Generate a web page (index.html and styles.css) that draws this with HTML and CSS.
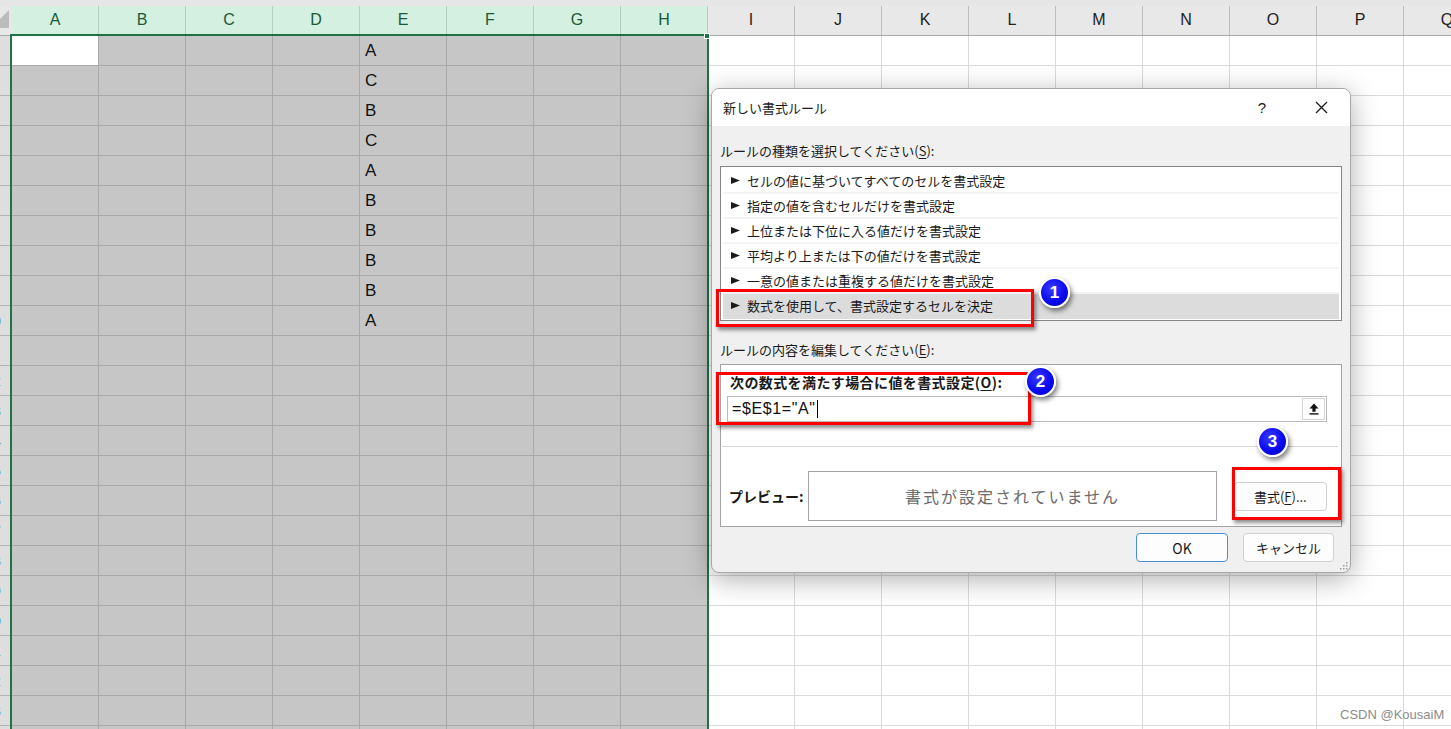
FILE: index.html
```html
<!DOCTYPE html>
<html lang="ja">
<head>
<meta charset="utf-8">
<title>新しい書式ルール</title>
<link rel="stylesheet" href="styles.css">
</head>
<body>
<div class="sheet">
  <div class="band"></div>
  <div class="hrow">
    <div class="corner"><svg width="12" height="29" viewBox="0 0 12 29"><polygon points="9,4 9,22 -9,22" fill="#bcbcbc"/></svg></div>
    <div class="ch sel">A</div><div class="ch sel">B</div><div class="ch sel">C</div><div class="ch sel">D</div><div class="ch sel">E</div><div class="ch sel">F</div><div class="ch sel">G</div><div class="ch sel">H</div>
    <div class="ch">I</div><div class="ch">J</div><div class="ch">K</div><div class="ch">L</div><div class="ch">M</div><div class="ch">N</div><div class="ch">O</div><div class="ch">P</div><div class="ch">Q</div>
  </div>
  <div class="r"><div class="rh"><span>1</span></div><span class="c a"></span><span class="c s"></span><span class="c s"></span><span class="c s"></span><span class="c s">A</span><span class="c s"></span><span class="c s"></span><span class="c s"></span><span class="c"></span><span class="c"></span><span class="c"></span><span class="c"></span><span class="c"></span><span class="c"></span><span class="c"></span><span class="c"></span><span class="c"></span></div>
  <div class="r"><div class="rh"><span>2</span></div><span class="c s"></span><span class="c s"></span><span class="c s"></span><span class="c s"></span><span class="c s">C</span><span class="c s"></span><span class="c s"></span><span class="c s"></span><span class="c"></span><span class="c"></span><span class="c"></span><span class="c"></span><span class="c"></span><span class="c"></span><span class="c"></span><span class="c"></span><span class="c"></span></div>
  <div class="r"><div class="rh"><span>3</span></div><span class="c s"></span><span class="c s"></span><span class="c s"></span><span class="c s"></span><span class="c s">B</span><span class="c s"></span><span class="c s"></span><span class="c s"></span><span class="c"></span><span class="c"></span><span class="c"></span><span class="c"></span><span class="c"></span><span class="c"></span><span class="c"></span><span class="c"></span><span class="c"></span></div>
  <div class="r"><div class="rh"><span>4</span></div><span class="c s"></span><span class="c s"></span><span class="c s"></span><span class="c s"></span><span class="c s">C</span><span class="c s"></span><span class="c s"></span><span class="c s"></span><span class="c"></span><span class="c"></span><span class="c"></span><span class="c"></span><span class="c"></span><span class="c"></span><span class="c"></span><span class="c"></span><span class="c"></span></div>
  <div class="r"><div class="rh"><span>5</span></div><span class="c s"></span><span class="c s"></span><span class="c s"></span><span class="c s"></span><span class="c s">A</span><span class="c s"></span><span class="c s"></span><span class="c s"></span><span class="c"></span><span class="c"></span><span class="c"></span><span class="c"></span><span class="c"></span><span class="c"></span><span class="c"></span><span class="c"></span><span class="c"></span></div>
  <div class="r"><div class="rh"><span>6</span></div><span class="c s"></span><span class="c s"></span><span class="c s"></span><span class="c s"></span><span class="c s">B</span><span class="c s"></span><span class="c s"></span><span class="c s"></span><span class="c"></span><span class="c"></span><span class="c"></span><span class="c"></span><span class="c"></span><span class="c"></span><span class="c"></span><span class="c"></span><span class="c"></span></div>
  <div class="r"><div class="rh"><span>7</span></div><span class="c s"></span><span class="c s"></span><span class="c s"></span><span class="c s"></span><span class="c s">B</span><span class="c s"></span><span class="c s"></span><span class="c s"></span><span class="c"></span><span class="c"></span><span class="c"></span><span class="c"></span><span class="c"></span><span class="c"></span><span class="c"></span><span class="c"></span><span class="c"></span></div>
  <div class="r"><div class="rh"><span>8</span></div><span class="c s"></span><span class="c s"></span><span class="c s"></span><span class="c s"></span><span class="c s">B</span><span class="c s"></span><span class="c s"></span><span class="c s"></span><span class="c"></span><span class="c"></span><span class="c"></span><span class="c"></span><span class="c"></span><span class="c"></span><span class="c"></span><span class="c"></span><span class="c"></span></div>
  <div class="r"><div class="rh"><span>9</span></div><span class="c s"></span><span class="c s"></span><span class="c s"></span><span class="c s"></span><span class="c s">B</span><span class="c s"></span><span class="c s"></span><span class="c s"></span><span class="c"></span><span class="c"></span><span class="c"></span><span class="c"></span><span class="c"></span><span class="c"></span><span class="c"></span><span class="c"></span><span class="c"></span></div>
  <div class="r"><div class="rh"><span>10</span></div><span class="c s"></span><span class="c s"></span><span class="c s"></span><span class="c s"></span><span class="c s">A</span><span class="c s"></span><span class="c s"></span><span class="c s"></span><span class="c"></span><span class="c"></span><span class="c"></span><span class="c"></span><span class="c"></span><span class="c"></span><span class="c"></span><span class="c"></span><span class="c"></span></div>
  <div class="r"><div class="rh"><span>11</span></div><span class="c s"></span><span class="c s"></span><span class="c s"></span><span class="c s"></span><span class="c s"></span><span class="c s"></span><span class="c s"></span><span class="c s"></span><span class="c"></span><span class="c"></span><span class="c"></span><span class="c"></span><span class="c"></span><span class="c"></span><span class="c"></span><span class="c"></span><span class="c"></span></div>
  <div class="r"><div class="rh"><span>12</span></div><span class="c s"></span><span class="c s"></span><span class="c s"></span><span class="c s"></span><span class="c s"></span><span class="c s"></span><span class="c s"></span><span class="c s"></span><span class="c"></span><span class="c"></span><span class="c"></span><span class="c"></span><span class="c"></span><span class="c"></span><span class="c"></span><span class="c"></span><span class="c"></span></div>
  <div class="r"><div class="rh"><span>13</span></div><span class="c s"></span><span class="c s"></span><span class="c s"></span><span class="c s"></span><span class="c s"></span><span class="c s"></span><span class="c s"></span><span class="c s"></span><span class="c"></span><span class="c"></span><span class="c"></span><span class="c"></span><span class="c"></span><span class="c"></span><span class="c"></span><span class="c"></span><span class="c"></span></div>
  <div class="r"><div class="rh"><span>14</span></div><span class="c s"></span><span class="c s"></span><span class="c s"></span><span class="c s"></span><span class="c s"></span><span class="c s"></span><span class="c s"></span><span class="c s"></span><span class="c"></span><span class="c"></span><span class="c"></span><span class="c"></span><span class="c"></span><span class="c"></span><span class="c"></span><span class="c"></span><span class="c"></span></div>
  <div class="r"><div class="rh"><span>15</span></div><span class="c s"></span><span class="c s"></span><span class="c s"></span><span class="c s"></span><span class="c s"></span><span class="c s"></span><span class="c s"></span><span class="c s"></span><span class="c"></span><span class="c"></span><span class="c"></span><span class="c"></span><span class="c"></span><span class="c"></span><span class="c"></span><span class="c"></span><span class="c"></span></div>
  <div class="r"><div class="rh"><span>16</span></div><span class="c s"></span><span class="c s"></span><span class="c s"></span><span class="c s"></span><span class="c s"></span><span class="c s"></span><span class="c s"></span><span class="c s"></span><span class="c"></span><span class="c"></span><span class="c"></span><span class="c"></span><span class="c"></span><span class="c"></span><span class="c"></span><span class="c"></span><span class="c"></span></div>
  <div class="r"><div class="rh"><span>17</span></div><span class="c s"></span><span class="c s"></span><span class="c s"></span><span class="c s"></span><span class="c s"></span><span class="c s"></span><span class="c s"></span><span class="c s"></span><span class="c"></span><span class="c"></span><span class="c"></span><span class="c"></span><span class="c"></span><span class="c"></span><span class="c"></span><span class="c"></span><span class="c"></span></div>
  <div class="r"><div class="rh"><span>18</span></div><span class="c s"></span><span class="c s"></span><span class="c s"></span><span class="c s"></span><span class="c s"></span><span class="c s"></span><span class="c s"></span><span class="c s"></span><span class="c"></span><span class="c"></span><span class="c"></span><span class="c"></span><span class="c"></span><span class="c"></span><span class="c"></span><span class="c"></span><span class="c"></span></div>
  <div class="r"><div class="rh"><span>19</span></div><span class="c s"></span><span class="c s"></span><span class="c s"></span><span class="c s"></span><span class="c s"></span><span class="c s"></span><span class="c s"></span><span class="c s"></span><span class="c"></span><span class="c"></span><span class="c"></span><span class="c"></span><span class="c"></span><span class="c"></span><span class="c"></span><span class="c"></span><span class="c"></span></div>
  <div class="r"><div class="rh"><span>20</span></div><span class="c s"></span><span class="c s"></span><span class="c s"></span><span class="c s"></span><span class="c s"></span><span class="c s"></span><span class="c s"></span><span class="c s"></span><span class="c"></span><span class="c"></span><span class="c"></span><span class="c"></span><span class="c"></span><span class="c"></span><span class="c"></span><span class="c"></span><span class="c"></span></div>
  <div class="r"><div class="rh"><span>21</span></div><span class="c s"></span><span class="c s"></span><span class="c s"></span><span class="c s"></span><span class="c s"></span><span class="c s"></span><span class="c s"></span><span class="c s"></span><span class="c"></span><span class="c"></span><span class="c"></span><span class="c"></span><span class="c"></span><span class="c"></span><span class="c"></span><span class="c"></span><span class="c"></span></div>
  <div class="r"><div class="rh"><span>22</span></div><span class="c s"></span><span class="c s"></span><span class="c s"></span><span class="c s"></span><span class="c s"></span><span class="c s"></span><span class="c s"></span><span class="c s"></span><span class="c"></span><span class="c"></span><span class="c"></span><span class="c"></span><span class="c"></span><span class="c"></span><span class="c"></span><span class="c"></span><span class="c"></span></div>
  <div class="r"><div class="rh"><span>23</span></div><span class="c s"></span><span class="c s"></span><span class="c s"></span><span class="c s"></span><span class="c s"></span><span class="c s"></span><span class="c s"></span><span class="c s"></span><span class="c"></span><span class="c"></span><span class="c"></span><span class="c"></span><span class="c"></span><span class="c"></span><span class="c"></span><span class="c"></span><span class="c"></span></div>
  <div class="r"><div class="rh"><span>24</span></div><span class="c s"></span><span class="c s"></span><span class="c s"></span><span class="c s"></span><span class="c s"></span><span class="c s"></span><span class="c s"></span><span class="c s"></span><span class="c"></span><span class="c"></span><span class="c"></span><span class="c"></span><span class="c"></span><span class="c"></span><span class="c"></span><span class="c"></span><span class="c"></span></div>
  <div class="selbox"></div>
  <div class="handle"></div>
</div>

<div class="dlg">
  <div class="tb">
    <span class="t">新しい書式ルール</span>
    <span class="help">?</span>
    <span class="cls"><svg width="13" height="13" viewBox="0 0 13 13"><path d="M1 1 L12 12 M12 1 L1 12" stroke="#1a1a1a" stroke-width="1.3" fill="none"/></svg></span>
  </div>
  <div class="body">
    <div class="lbl l1">ルールの種類を選択してください(<u>S</u>):</div>
    <div class="list">
      <div class="it"><svg class="tri" width="9" height="7" viewBox="0 0 9 7"><polygon points="0,0 9,3.5 0,7" fill="#1a1a1a"/></svg>セルの値に基づいてすべてのセルを書式設定</div>
      <div class="it"><svg class="tri" width="9" height="7" viewBox="0 0 9 7"><polygon points="0,0 9,3.5 0,7" fill="#1a1a1a"/></svg>指定の値を含むセルだけを書式設定</div>
      <div class="it"><svg class="tri" width="9" height="7" viewBox="0 0 9 7"><polygon points="0,0 9,3.5 0,7" fill="#1a1a1a"/></svg>上位または下位に入る値だけを書式設定</div>
      <div class="it"><svg class="tri" width="9" height="7" viewBox="0 0 9 7"><polygon points="0,0 9,3.5 0,7" fill="#1a1a1a"/></svg>平均より上または下の値だけを書式設定</div>
      <div class="it"><svg class="tri" width="9" height="7" viewBox="0 0 9 7"><polygon points="0,0 9,3.5 0,7" fill="#1a1a1a"/></svg>一意の値または重複する値だけを書式設定</div>
      <div class="it on"><svg class="tri" width="9" height="7" viewBox="0 0 9 7"><polygon points="0,0 9,3.5 0,7" fill="#1a1a1a"/></svg>数式を使用して、書式設定するセルを決定</div>
    </div>
    <div class="lbl l2">ルールの内容を編集してください(<u>E</u>):</div>
    <div class="edit">
      <div class="fl">次の数式を満たす場合に値を書式設定(<u>O</u>):</div>
      <div class="inp">
        <span class="val">=$E$1="A"<span class="caret"></span></span>
        <span class="ub"><svg width="10" height="12" viewBox="0 0 10 12"><polygon points="5,0.5 9.5,5.5 6.6,5.5 6.6,8.8 3.4,8.8 3.4,5.5 0.5,5.5" fill="#111"/><rect x="0.5" y="10.2" width="9" height="1.4" fill="#111"/></svg></span>
      </div>
      <div class="sep"></div>
      <div class="pv">
        <span class="pvl">プレビュー:</span>
        <div class="pvb">書式が設定されていません</div>
        <div class="btn fb">書式(<u>F</u>)...</div>
      </div>
    </div>
    <div class="btns">
      <div class="btn ok">OK</div>
      <div class="btn cn">キャンセル</div>
    </div>
  </div>
  <svg class="grip" width="9" height="9" viewBox="0 0 9 9"><g fill="#a0a0a0"><rect x="7" y="1" width="1.5" height="1.5"/><rect x="4" y="4" width="1.5" height="1.5"/><rect x="7" y="4" width="1.5" height="1.5"/><rect x="1" y="7" width="1.5" height="1.5"/><rect x="4" y="7" width="1.5" height="1.5"/><rect x="7" y="7" width="1.5" height="1.5"/></g></svg>

  <div class="mark m1"></div>
  <div class="mark m2"></div>
  <div class="mark m3"></div>
  <div class="badge b1">1</div>
  <div class="badge b2">2</div>
  <div class="badge b3">3</div>
</div>

<div class="wm">CSDN @KousaiM</div>
</body>
</html>
```
FILE: styles.css
```css
* { box-sizing: border-box; margin: 0; padding: 0; }
html, body { margin: 0; }
body {
  width: 1451px;
  height: 729px;
  overflow: hidden;
  position: relative;
  background: #fff;
  font-family: "Liberation Sans", Arial, sans-serif;
}

/* spreadsheet */
.sheet { position: relative; width: 1451px; height: 729px; overflow: hidden; }
.band { height: 6px; background: #e6e6e6; }
.hrow {
  display: flex;
  height: 30px;
  background: #e8e8e8;
  border-bottom: 1px solid #a9a9a9;
}
.corner { flex: 0 0 12px; overflow: hidden; }
.corner svg { display: block; }
.ch {
  flex: 0 0 87px;
  border-right: 1px solid #bdbdbd;
  display: flex;
  align-items: center;
  justify-content: center;
  padding-bottom: 1px;
  font-size: 16px;
  color: #222;
}
.ch.sel { background: #d3f0e0; color: #1b5a36; border-right-color: #b5cdbf; }

.r { display: flex; height: 30px; }
.rh {
  flex: 0 0 12px;
  background: #dedede;
  border-bottom: 1px solid #b3b3b3;
  overflow: hidden;
  display: flex;
  align-items: center;
  font-size: 14px;
  color: #1d5d3a;
}
.rh span { flex: 0 0 36px; margin-left: -25px; text-align: center; }
.c {
  flex: 0 0 87px;
  display: flex;
  align-items: center;
  padding-left: 5px;
  border-right: 1px solid #dadada;
  border-bottom: 1px solid #dadada;
  font-size: 17px;
  color: #111;
}
.c.s { background: #c6c6c6; border-color: #a9a9a9; }
.c.a { background: #fff; border-color: #a9a9a9; }

.selbox {
  position: absolute;
  left: 10px;
  top: 34px;
  width: 699px;
  height: 720px;
  border: 2px solid #1f7246;
  border-bottom: 0;
}
.handle {
  position: absolute;
  left: 704px;
  top: 33px;
  width: 6px;
  height: 6px;
  background: #1f7246;
  border: 1px solid #fff;
}

/* dialog */
.dlg {
  position: absolute;
  left: 711px;
  top: 88px;
  width: 640px;
  height: 485px;
  background: #f0f0f0;
  border: 1px solid #a8a8a8;
  border-radius: 8px;
  box-shadow: 0 6px 28px rgba(0, 0, 0, 0.32);
  font-family: "Noto Sans CJK JP", sans-serif;
  font-size: 13px;
  color: #1a1a1a;
}
.tb {
  height: 37px;
  background: #fff;
  border-radius: 7px 7px 0 0;
  display: flex;
  align-items: center;
  padding-left: 11px;
}
.tb .t { flex: 1; }
.tb .help { width: 40px; text-align: center; font-family: "Liberation Sans", sans-serif; font-size: 15px; }
.tb .cls { width: 46px; margin-left: 16px; margin-right: 6px; display: flex; justify-content: center; }
.tb .cls svg { display: block; }

.body { padding: 0 8px; }
.lbl { height: 20px; line-height: 20px; }
.l1 { margin-top: 15px; }
.l2 { margin-top: 19px; }
u { text-decoration: underline; text-underline-offset: 2px; }

.list {
  margin-top: 5px;
  background: #fff;
  border: 1px solid #858585;
  padding: 2px 2px 1px;
}
.it {
  height: 25px;
  display: flex;
  align-items: center;
  padding-left: 8px;
  border-bottom: 2px solid #f3f3f3;
}
.it .tri { margin-right: 7px; flex: none; }
.it.on { background: #dcdcdc; border-bottom-color: #dcdcdc; }

.edit {
  margin-top: 4px;
  background: #fff;
  border: 1px solid #a3a3a3;
  padding: 7px 14px 5px 6px;
}
.fl {
  height: 20px;
  line-height: 20px;
  padding-left: 3px;
  font-weight: bold;
  font-size: 14px;
  letter-spacing: 0.4px;
}
.inp {
  margin-top: 4px;
  width: 600px;
  height: 26px;
  border: 1px solid #bcbcbc;
  display: flex;
  align-items: center;
  justify-content: space-between;
  padding-left: 4px;
}
.val {
  display: flex;
  align-items: center;
  font-family: "Liberation Sans", sans-serif;
  font-size: 16px;
  letter-spacing: 0.6px;
  color: #111;
}
.caret { width: 1px; height: 18px; background: #000; margin-left: 1px; }
.ub {
  width: 23px;
  height: 22px;
  margin-right: 1px;
  border: 1px solid #d6d6d6;
  background: #fdfdfd;
  display: flex;
  align-items: center;
  justify-content: center;
}
.ub svg { display: block; }
.sep { margin: 24px -11px 0 -5px; height: 1px; background: #d4d4d4; }
.pv { margin-top: 24px; display: flex; align-items: center; }
.pvl { width: 82px; padding-left: 2px; font-weight: bold; font-size: 14px; }
.pvb {
  width: 411px;
  height: 50px;
  border: 1px solid #a3a3a3;
  display: flex;
  align-items: center;
  justify-content: center;
  font-size: 16px;
  letter-spacing: 2px;
  color: #6a6a6a;
}
.btn {
  height: 29px;
  border: 1px solid #d0d0d0;
  border-radius: 4px;
  background: #fdfdfd;
  display: flex;
  align-items: center;
  justify-content: center;
  font-size: 13px;
}
.fb { margin-left: 17px; width: 94px; }
.btns { display: flex; justify-content: flex-end; gap: 15px; margin-top: 6px; padding-right: 8px; }
.ok { width: 92px; border-color: #4a8fd4; font-size: 14px; }
.cn { width: 91px; }
.grip { position: absolute; right: 2px; bottom: 2px; }

/* annotations */
.mark {
  position: absolute;
  border: 3px solid #ff0000;
  box-shadow: 2px 3px 4px rgba(0, 0, 0, 0.45);
}
.m1 { left: 4px; top: 200px; width: 318px; height: 38px; }
.m2 { left: 4px; top: 283px; width: 315px; height: 53px; }
.m3 { left: 520px; top: 378px; width: 109px; height: 53px; }
.badge {
  position: absolute;
  width: 31px;
  height: 31px;
  border-radius: 50%;
  border: 2px solid #fff;
  background: radial-gradient(circle at 40% 35%, #3a3aff 0%, #0a0af0 55%, #0000c0 100%);
  box-shadow: 2px 3px 5px rgba(0, 0, 0, 0.5);
  color: #fff;
  font-family: "Liberation Sans", Arial, sans-serif;
  font-weight: bold;
  font-size: 17px;
  display: flex;
  align-items: center;
  justify-content: center;
}
.b1 { left: 327px; top: 188px; }
.b2 { left: 313px; top: 277px; }
.b3 { left: 545px; top: 337px; }

.wm {
  position: absolute;
  left: 1340px;
  top: 707px;
  font-family: "Liberation Sans", Arial, sans-serif;
  font-size: 13px;
  color: #8c8c8c;
}
```
